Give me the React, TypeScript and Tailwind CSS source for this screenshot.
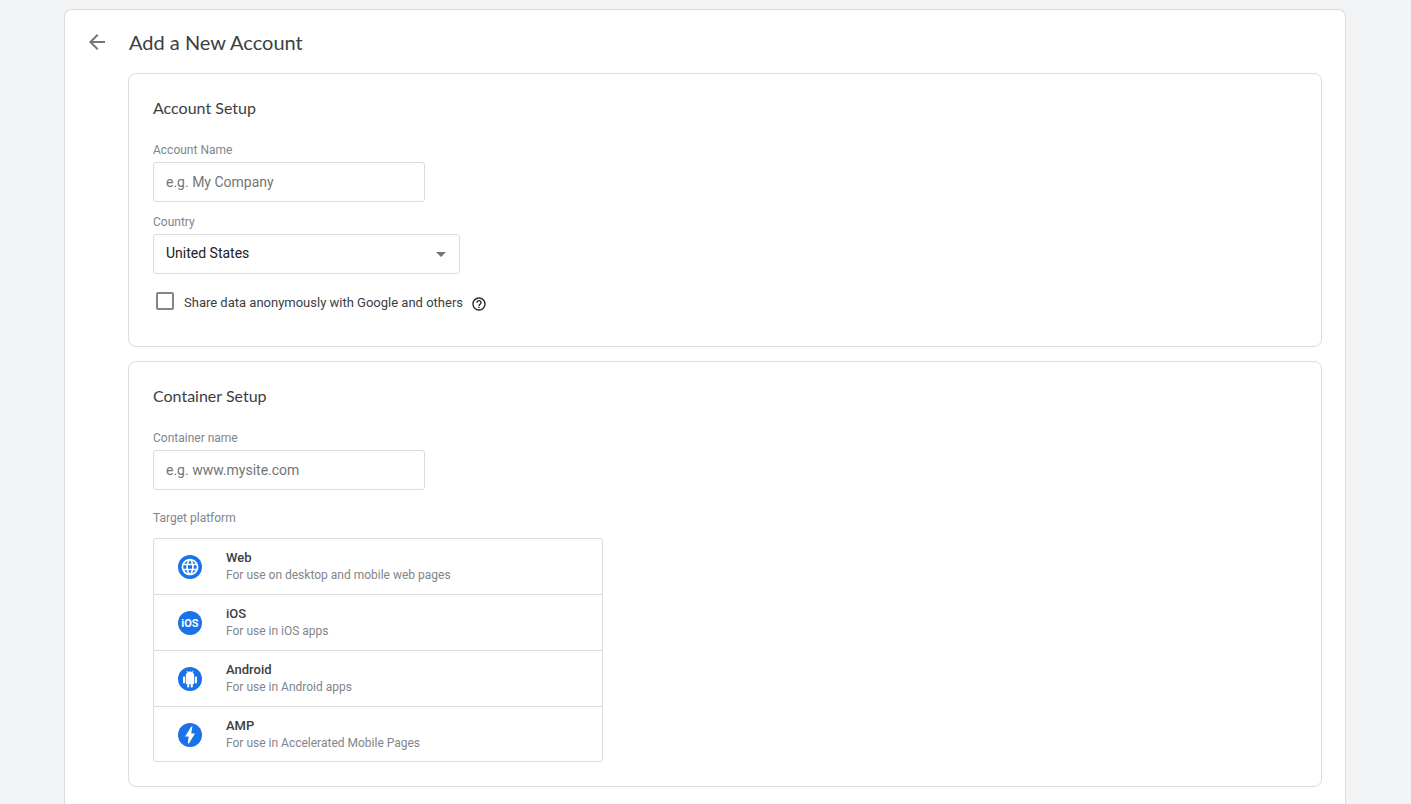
import type { ReactNode } from 'react'
import { MdArrowBack, MdArrowDropDown, MdHelpOutline, MdLanguage } from 'react-icons/md'

const platforms = [
  { id: 'web', name: 'Web', description: 'For use on desktop and mobile web pages', icon: <WebIcon /> },
  { id: 'ios', name: 'iOS', description: 'For use in iOS apps', icon: <IosIcon /> },
  { id: 'android', name: 'Android', description: 'For use in Android apps', icon: <AndroidIcon /> },
  { id: 'amp', name: 'AMP', description: 'For use in Accelerated Mobile Pages', icon: <AmpIcon /> },
]

function WebIcon() {
  return (
    <span className="flex size-6 items-center justify-center rounded-full bg-[#1a73e8] text-white">
      <MdLanguage size={20} />
    </span>
  )
}

function IosIcon() {
  return (
    <svg viewBox="0 0 24 24" className="size-6">
      <circle cx="12" cy="12" r="12" fill="#1a73e8" />
      <text x="12" y="16" textAnchor="middle" fill="#fff" className="font-['Roboto',sans-serif] text-[11px] font-bold">
        iOS
      </text>
    </svg>
  )
}

function AndroidIcon() {
  return (
    <svg viewBox="0 0 24 24" className="size-6">
      <circle cx="12" cy="12" r="12" fill="#1a73e8" />
      <path
        transform="translate(3.6 3.8) scale(0.7)"
        fill="#fff"
        d="M6 18c0 .55.45 1 1 1h1v3.5c0 .83.67 1.5 1.5 1.5s1.5-.67 1.5-1.5V19h2v3.5c0 .83.67 1.5 1.5 1.5s1.5-.67 1.5-1.5V19h1c.55 0 1-.45 1-1V7H6v11zM3.5 8C2.67 8 2 8.67 2 9.5v7c0 .83.67 1.5 1.5 1.5S5 17.33 5 16.5v-7C5 8.67 4.33 8 3.5 8zm17 0c-.83 0-1.5.67-1.5 1.5v7c0 .83.67 1.5 1.5 1.5s1.5-.67 1.5-1.5v-7c0-.83-.67-1.5-1.5-1.5zm-4.97-5.84l1.3-1.3c.2-.2.2-.51 0-.71-.2-.2-.51-.2-.71 0l-1.48 1.48C13.85 1.23 12.95 1 12 1c-.96 0-1.86.23-2.66.63L7.85.15c-.2-.2-.51-.2-.71 0-.2.2-.2.51 0 .71l1.31 1.31C6.97 3.26 6 5.01 6 7h12c0-1.99-.97-3.75-2.47-4.84z"
      />
    </svg>
  )
}

function AmpIcon() {
  return (
    <svg viewBox="0 0 24 24" className="size-6">
      <circle cx="12" cy="12" r="12" fill="#1a73e8" />
      <path fill="#fff" d="M13.4 3.6L7 13.4h3.6L9.8 20.4h1.1L17 10.6h-3.8L14.4 3.6z" />
    </svg>
  )
}

function Card({ title, children }: { title: string; children: ReactNode }) {
  return (
    <section className="rounded-lg border border-[#dadce0] px-6 pt-[22px] pb-6">
      <h2 className="mb-[22px] font-['Lato',sans-serif] text-base leading-6 text-[#3c4043]">{title}</h2>
      {children}
    </section>
  )
}

function TextField({ id, label, placeholder }: { id: string; label: string; placeholder: string }) {
  return (
    <div>
      <label htmlFor={id} className="mb-1 block text-xs leading-4 text-[#80868b]">
        {label}
      </label>
      <input
        id={id}
        type="text"
        placeholder={placeholder}
        className="block h-10 w-[272px] rounded-[3px] border border-[#dadce0] px-3 text-sm text-[#212121] placeholder:text-[#757575]"
      />
    </div>
  )
}

export default function App() {
  return (
    <div className="min-h-screen bg-[#f1f3f4] pt-[9px] pr-[65px] pl-16 font-['Roboto',sans-serif]">
      <main className="min-h-[calc(100vh-9px)] rounded-t-lg border border-b-0 border-[#dadce0] bg-white pr-[23px] pb-4">
        <header className="flex h-[63px] items-center pl-5">
          <button type="button" aria-label="Back" className="mr-5 text-[#757575]">
            <MdArrowBack size={24} />
          </button>
          <h1 className="font-['Lato',sans-serif] text-xl leading-7 text-[#3c4043]">Add a New Account</h1>
        </header>

        <div className="ml-[63px] space-y-[14px]">
          <Card title="Account Setup">
            <TextField id="account-name" label="Account Name" placeholder="e.g. My Company" />

            <label htmlFor="country" className="mt-3 mb-1 block text-xs leading-4 text-[#80868b]">
              Country
            </label>
            <div className="relative w-[307px]">
              <select
                id="country"
                defaultValue="us"
                className="block h-10 w-full appearance-none rounded-[3px] border border-[#dadce0] bg-white px-3 pb-0.5 text-sm text-[#212121]"
              >
                <option value="us">United States</option>
                <option value="ca">Canada</option>
                <option value="gb">United Kingdom</option>
              </select>
              <MdArrowDropDown
                size={24}
                className="pointer-events-none absolute top-2 right-[7px] text-[#757575]"
              />
            </div>

            <div className="mt-[17px] mb-[7px] flex h-6 items-center pl-[3px]">
              <input
                id="share-data"
                type="checkbox"
                className="mr-2.5 mb-1 size-[18px] appearance-none rounded-[2px] border-2 border-[#80868b] checked:bg-[#1a73e8]"
              />
              <label htmlFor="share-data" className="text-[13px] leading-5 text-[#3c4043]">
                Share data anonymously with Google and others
              </label>
              <button type="button" aria-label="Help" className="mt-0.5 ml-2 text-[#202124]">
                <MdHelpOutline size={16} />
              </button>
            </div>
          </Card>

          <Card title="Container Setup">
            <TextField id="container-name" label="Container name" placeholder="e.g. www.mysite.com" />

            <h3 id="target-platform" className="mt-5 mb-3 text-xs leading-4 text-[#80868b]">
              Target platform
            </h3>
            <ul
              aria-labelledby="target-platform"
              className="w-[450px] divide-y divide-[#dadce0] rounded-[3px] border border-[#dadce0]"
            >
              {platforms.map((platform) => (
                <li key={platform.id} className="h-14 last:h-[54px]">
                  <button type="button" className="flex h-full w-full items-start px-6 pt-2.5 text-left">
                    <span className="mt-1.5">{platform.icon}</span>
                    <span className="ml-6">
                      <span className="block text-[13px] leading-[18px] font-medium text-[#3c4043]">
                        {platform.name}
                      </span>
                      <span className="block text-xs leading-4 text-[#80868b]">{platform.description}</span>
                    </span>
                  </button>
                </li>
              ))}
            </ul>
          </Card>
        </div>
      </main>
    </div>
  )
}
